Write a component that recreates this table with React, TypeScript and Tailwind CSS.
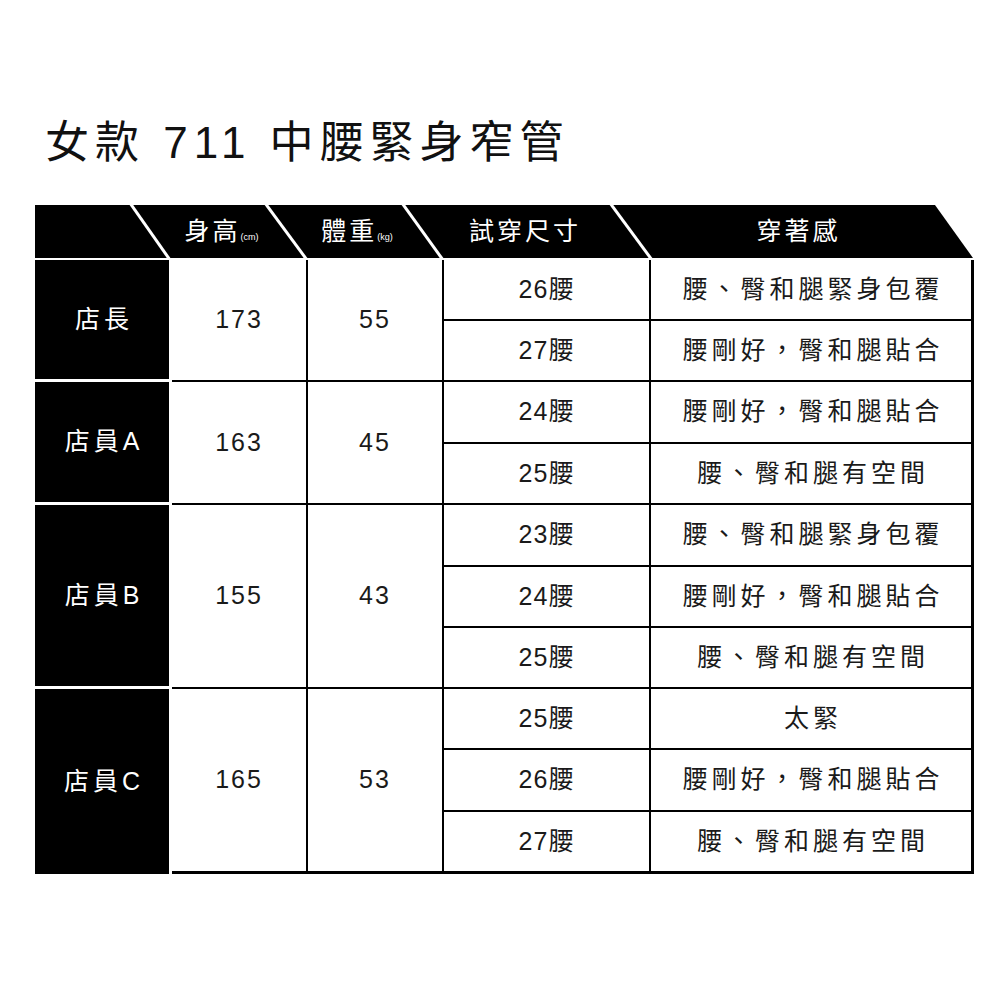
import React from 'react'

interface Group {
  label: string
  height: string
  weight: string
  rows: { size: string; feel: string; h: number }[]
}

const groups: Group[] = [
  {
    label: '店長',
    height: '173',
    weight: '55',
    rows: [
      { size: '26腰', feel: '腰、臀和腿緊身包覆', h: 61 },
      { size: '27腰', feel: '腰剛好，臀和腿貼合', h: 61 },
    ],
  },
  {
    label: '店員A',
    height: '163',
    weight: '45',
    rows: [
      { size: '24腰', feel: '腰剛好，臀和腿貼合', h: 62 },
      { size: '25腰', feel: '腰、臀和腿有空間', h: 61 },
    ],
  },
  {
    label: '店員B',
    height: '155',
    weight: '43',
    rows: [
      { size: '23腰', feel: '腰、臀和腿緊身包覆', h: 62 },
      { size: '24腰', feel: '腰剛好，臀和腿貼合', h: 61 },
      { size: '25腰', feel: '腰、臀和腿有空間', h: 61 },
    ],
  },
  {
    label: '店員C',
    height: '165',
    weight: '53',
    rows: [
      { size: '25腰', feel: '太緊', h: 61 },
      { size: '26腰', feel: '腰剛好，臀和腿貼合', h: 62 },
      { size: '27腰', feel: '腰、臀和腿有空間', h: 61 },
    ],
  },
]

const font = "font-['Liberation_Sans','Noto_Sans_CJK_TC',sans-serif]"

function HeaderBand() {
  return (
    <div className="relative h-[53px] w-[940px]">
      {/* black band with slanted separators */}
      <svg width="940" height="53" className="absolute inset-0">
        <polygon points="0,0 900,0 938,53 0,53" fill="#000" />
        <line x1="95" y1="-2" x2="135" y2="55" stroke="#fff" strokeWidth="3" />
        <line x1="230" y1="-2" x2="272" y2="55" stroke="#fff" strokeWidth="3" />
        <line x1="367" y1="-2" x2="408" y2="55" stroke="#fff" strokeWidth="3" />
        <line x1="575" y1="-2" x2="617" y2="55" stroke="#fff" strokeWidth="3" />
      </svg>
      <div className="absolute inset-0 flex items-center text-white text-[25px] tracking-[3px]">
        <div className="w-[115px]" />
        <div className="w-[143px] flex justify-center items-baseline">
          <span>身高</span>
          <span className="text-[9px] tracking-normal">(cm)</span>
        </div>
        <div className="w-[128px] flex justify-center items-baseline">
          <span>體重</span>
          <span className="text-[9px] tracking-normal">(kg)</span>
        </div>
        <div className="w-[208px] flex justify-center">試穿尺寸</div>
        <div className="w-[339px] flex justify-center">穿著感</div>
      </div>
    </div>
  )
}

function GroupRow({ group, last }: { group: Group; last: boolean }) {
  return (
    <div className="flex">
      <div
        className={`w-[134px] bg-black text-white text-[25px] tracking-[4px] pl-[4px] flex items-center justify-center ${
          last ? '' : 'mb-[3px]'
        }`}
      >
        {group.label}
      </div>
      <div
        className={`ml-[3px] flex w-[802px] border-r-[3px] border-black ${
          last ? 'border-b-[3px]' : 'border-b-2'
        }`}
      >
        <div className="w-[136px] border-r-2 border-black flex items-center justify-center text-[25px] tracking-[2px] text-[#1a1a1a]">
          {group.height}
        </div>
        <div className="w-[136px] border-r-2 border-black flex items-center justify-center text-[25px] tracking-[2px] text-[#1a1a1a]">
          {group.weight}
        </div>
        <div className="flex-1 flex flex-col">
          {group.rows.map((r, i) => {
            const isLast = i === group.rows.length - 1
            return (
              <div
                key={i}
                className={`flex ${isLast ? '' : 'border-b-2 border-black'}`}
                style={{ height: isLast ? r.h - 2 : r.h }}
              >
                <div className="w-[207px] border-r-2 border-black flex items-center justify-center text-[25px] tracking-[1px] text-[#1a1a1a]">
                  {r.size}
                </div>
                <div className="flex-1 flex items-center justify-center text-[25px] tracking-[4px] pl-[4px] text-[#1a1a1a]">
                  {r.feel}
                </div>
              </div>
            )
          })}
        </div>
      </div>
    </div>
  )
}

export default function App() {
  return (
    <div className={`w-[1000px] h-[1000px] bg-white pt-[112px] pl-[35px] ${font}`}>
      <h1 className="pl-[10px] text-[44px] leading-[62px] tracking-[6px] text-[#111]">
        女款 711 中腰緊身窄管
      </h1>

      <div className="mt-[31px] w-[940px]">
        <HeaderBand />
        <div className="h-[2px]" />
        {groups.map((g, i) => (
          <GroupRow key={g.label} group={g} last={i === groups.length - 1} />
        ))}
      </div>
    </div>
  )
}
